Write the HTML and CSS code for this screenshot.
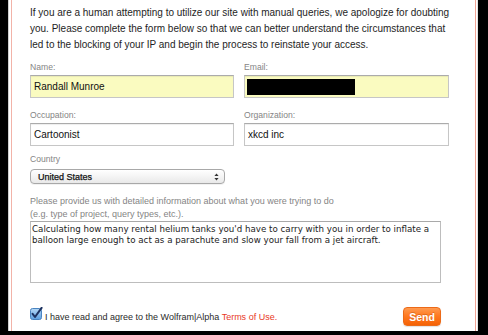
FILE: index.html
```html
<!DOCTYPE html>
<html>
<head>
<meta charset="utf-8">
<link rel="stylesheet" href="styles.css">
</head>
<body>
<div class="frame">
  <div class="sheet">
    <p class="intro">If you are a human attempting to utilize our site with manual queries, we apologize for doubting<br>you. Please complete the form below so that we can better understand the circumstances that<br>led to the blocking of your IP and begin the process to reinstate your access.</p>
    <div class="grid">
      <div class="field">
        <span class="label">Name:</span>
        <div class="input hl">Randall Munroe</div>
      </div>
      <div class="field">
        <span class="label">Email:</span>
        <div class="input hl"><span class="redact"></span></div>
      </div>
      <div class="field">
        <span class="label">Occupation:</span>
        <div class="input">Cartoonist</div>
      </div>
      <div class="field">
        <span class="label">Organization:</span>
        <div class="input">xkcd inc</div>
      </div>
    </div>
    <div class="country">
      <span class="label">Country</span>
      <div class="select">
        <span class="select-text">United States</span>
        <svg width="5" height="8" viewBox="0 0 5 8"><path d="M2.5 0.5 L4.6 3 H0.4 Z M2.5 7.5 L4.6 5 H0.4 Z" fill="#333"/></svg>
      </div>
    </div>
    <p class="help">Please provide us with detailed information about what you were trying to do<br>(e.g. type of project, query types, etc.).</p>
    <textarea class="details">Calculating how many rental helium tanks you'd have to carry with you in order to inflate a balloon large enough to act as a parachute and slow your fall from a jet aircraft.</textarea>
    <div class="agree-row">
      <div class="agree">
        <svg class="check" width="13" height="13" viewBox="0 0 13 13">
          <defs>
            <linearGradient id="cb" x1="0" y1="0" x2="0" y2="1">
              <stop offset="0" stop-color="#b5d8f6"/>
              <stop offset="1" stop-color="#5c9fe0"/>
            </linearGradient>
          </defs>
          <rect x="0.5" y="1.5" width="11" height="11" rx="2" fill="url(#cb)" stroke="#4a84c0"/>
          <path d="M2.6 6.8 L5 10 L11.6 0.8" fill="none" stroke="#1d3260" stroke-width="2" stroke-linecap="round" stroke-linejoin="round"/>
        </svg>
        <span class="agree-text">I have read and agree to the Wolfram|Alpha <span class="terms">Terms of Use.</span></span>
      </div>
      <button class="send">Send</button>
    </div>
  </div>
</div>
</body>
</html>
```

FILE: styles.css
```css
* { box-sizing: border-box; }
html, body { margin: 0; padding: 0; background: #000; }
body {
  width: 488px;
  height: 335px;
  overflow: hidden;
  font-family: "Liberation Sans", Arial, sans-serif;
}
.frame {
  margin-left: 8px;
  width: 470px;
  height: 331px;
  background: #fff;
  border-left: 1px solid #cfcfcf;
  border-right: 1px solid #e2e2e2;
  padding: 0 1px 0 2px;
}
.sheet {
  height: 100%;
  border-left: 1px solid #f2b3a8;
  border-right: 1px solid #f1a494;
  padding: 5px 0 0 18px;
}
.intro {
  margin: 0;
  font-size: 10px;
  line-height: 16px;
  color: #1e1e1e;
  white-space: nowrap;
}
.grid {
  display: grid;
  grid-template-columns: 204px 205px;
  column-gap: 10px;
  row-gap: 12px;
  margin-top: 9px;
}
.field { display: flex; flex-direction: column; }
.label {
  display: block;
  font-size: 8.6px;
  line-height: 11px;
  color: #858585;
  margin-bottom: 2px;
}
.input {
  height: 23px;
  border: 1px solid #c6c6c6;
  border-top-color: #ababab;
  background: #fff;
  box-shadow: inset 0 1px 1px rgba(0,0,0,0.07);
  font-size: 10px;
  color: #111;
  padding-left: 3px;
  display: flex;
  align-items: center;
}
.input.hl { background: #fafbc0; }
.redact {
  display: block;
  width: 108px;
  height: 16px;
  background: #000;
  margin-left: -1px;
}
.country { margin-top: 8px; }
.country .label { margin-bottom: 4px; }
.select {
  width: 195px;
  height: 15px;
  border: 1px solid #a8a8a8;
  border-radius: 4px;
  background: linear-gradient(#ffffff, #e9e9e9);
  box-shadow: 0 1px 0 rgba(0,0,0,0.05);
  display: flex;
  align-items: center;
  justify-content: space-between;
  padding: 0 5px 0 7px;
}
.select-text {
  font-size: 9px;
  color: #111;
  -webkit-text-stroke: 0.25px #111;
}
.help {
  margin: 11px 0 0;
  font-size: 9px;
  line-height: 13px;
  color: #858585;
  white-space: nowrap;
}
.details {
  display: block;
  width: 411px;
  height: 62px;
  margin: 0;
  border: 1px solid #bdbdbd;
  border-top-color: #a9a9a9;
  padding: 2px 1px;
  font-family: "DejaVu Sans", Verdana, sans-serif;
  font-size: 8.7px;
  line-height: 10.5px;
  color: #222;
  resize: none;
  overflow: hidden;
  outline: none;
}
.agree-row {
  margin-top: 24px;
  width: 411px;
  height: 19px;
  display: flex;
  justify-content: space-between;
  align-items: stretch;
}
.agree { display: flex; align-items: flex-start; }
.check { display: block; margin-right: 2px; margin-top: 0; }
.agree-text {
  align-self: flex-end;
  margin-bottom: 3px;
  font-size: 9px;
  line-height: 11px;
  color: #2a2a2a;
}
.terms { color: #e8391f; }
.send {
  width: 38px;
  height: 19px;
  margin: 0;
  padding: 0;
  border: 1px solid #ec6a18;
  border-radius: 4px;
  background: linear-gradient(#ff9a4f, #ff7a22 45%, #f56205);
  color: #fff;
  font-family: "Liberation Sans", Arial, sans-serif;
  font-weight: bold;
  font-size: 10.5px;
  text-shadow: 0 -1px 0 rgba(160,60,0,0.35);
  box-shadow: 0 1px 1px rgba(0,0,0,0.12);
}
```
